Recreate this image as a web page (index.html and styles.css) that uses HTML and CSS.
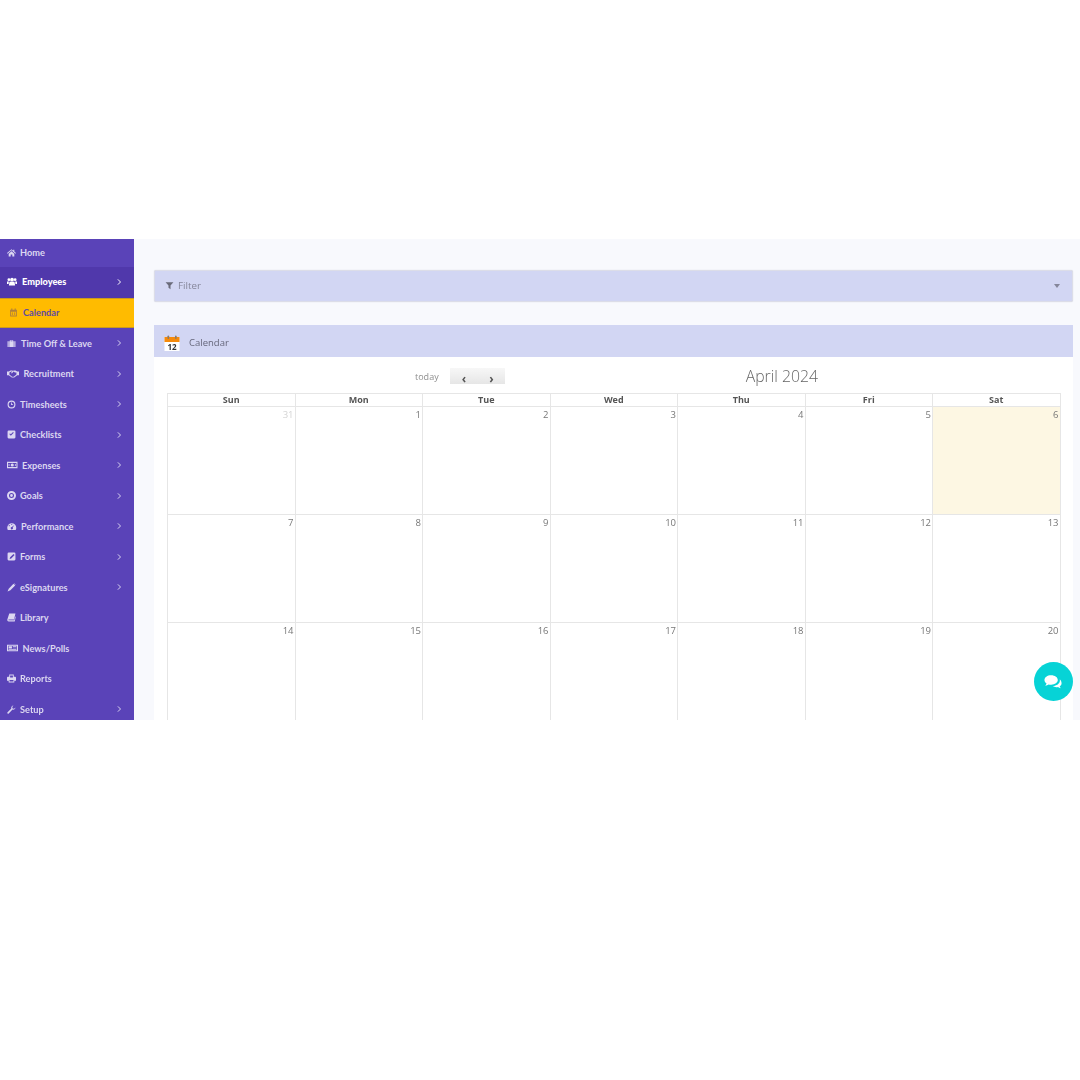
FILE: index.html
```html
<!DOCTYPE html>
<html lang="en">
<head>
<meta charset="utf-8">
<title>Calendar</title>
<link rel="stylesheet" href="styles.css">
</head>
<body>
<div class="top-space"></div>
<div class="app">
  <nav class="sidebar">
    <a class="item first"><svg class="ico" viewBox="0 0 16 16"><path d="M8 2 0 9l1 1 7-6 7 6 1-1-3-2.600V3h-2v1.700zM3 10.200V15h3.500v-3.500h3V15H13v-4.800L8 5.800z"/></svg><span>Home</span></a>
    <a class="item open strong"><svg class="ico wide" viewBox="0 0 16 16"><circle cx="8" cy="5" r="3"/><circle cx="3" cy="5" r="2.200"/><circle cx="13" cy="5" r="2.200"/><path d="M4 8.500h8l1 6H3zM0 8h3L2.500 12H0zM13 8h3v4h-2.500z"/></svg><span>Employees</span><svg class="chev" viewBox="0 0 8 10"><path d="M2.500 1.500 6 5 2.500 8.500"/></svg></a>
    <a class="item active"><svg class="ico cal" viewBox="0 0 16 16"><path d="M2 3h2V1h2v2h4V1h2v2h2v12H2zM3.500 6.500v7h9v-7z"/><path d="M5 8h2v2H5zM9 8h2v2H9zM5 11h2v1.500H5zM9 11h2v1.500H9z"/></svg><span>Calendar</span></a>
    <a class="item"><svg class="ico ico-case" viewBox="0 0 16 16"><path d="M5 4V2h6v2h4v10H1V4zm1.500 0h3V3.300h-3zM3 4h1v10H3zM12 4h1v10h-1z" fill-rule="evenodd"/></svg><span>Time Off &amp; Leave</span><svg class="chev" viewBox="0 0 8 10"><path d="M2.500 1.500 6 5 2.500 8.500"/></svg></a>
    <a class="item"><svg class="ico gap-lg" viewBox="0 0 20 14"><path d="M0 3h3l3-2h3l1 1 1-1h3l3 2h3v6h-3l-5 4H8L3 9H0zm4 1.500v3.300L8.500 11.500h2.700l4.500-3.700V4.500h-2.500L11 3 8 6 6.800 5 9 3H7z" fill-rule="evenodd"/></svg><span>Recruitment</span><svg class="chev" viewBox="0 0 8 10"><path d="M2.500 1.500 6 5 2.500 8.500"/></svg></a>
    <a class="item"><svg class="ico" viewBox="0 0 16 16"><path d="M8 1a7 7 0 1 0 0 14A7 7 0 0 0 8 1zm0 2a5 5 0 1 1 0 10A5 5 0 0 1 8 3zM7.200 4.500v4.300h3.600V7.400H8.600V4.500z" fill-rule="evenodd"/></svg><span>Timesheets</span><svg class="chev" viewBox="0 0 8 10"><path d="M2.500 1.500 6 5 2.500 8.500"/></svg></a>
    <a class="item"><svg class="ico" viewBox="0 0 16 16"><path d="M3 1h10a2 2 0 0 1 2 2v10a2 2 0 0 1-2 2H3a2 2 0 0 1-2-2V3a2 2 0 0 1 2-2zm9 4-1.300-1.300L6.800 7.600 5.300 6 4 7.300l2.800 2.900z" fill-rule="evenodd"/></svg><span>Checklists</span><svg class="chev" viewBox="0 0 8 10"><path d="M2.500 1.500 6 5 2.500 8.500"/></svg></a>
    <a class="item"><svg class="ico gap-md" viewBox="0 0 20 14"><path d="M0 1h20v12H0zm2 2v8h16V3zm8 1a3 3 0 1 1 0 6 3 3 0 0 1 0-6zM3 5.500h2v3H3zM15 5.500h2v3h-2z" fill-rule="evenodd"/></svg><span>Expenses</span><svg class="chev" viewBox="0 0 8 10"><path d="M2.500 1.500 6 5 2.500 8.500"/></svg></a>
    <a class="item"><svg class="ico" viewBox="0 0 16 16"><path d="M8 0a8 8 0 1 0 0 16A8 8 0 0 0 8 0zm0 3.500a4.500 4.500 0 1 1 0 9 4.500 4.500 0 0 1 0-9zm0 2a2.500 2.500 0 1 0 0 5 2.500 2.500 0 0 0 0-5z"/></svg><span>Goals</span><svg class="chev" viewBox="0 0 8 10"><path d="M2.500 1.500 6 5 2.500 8.500"/></svg></a>
    <a class="item"><svg class="ico wide-sm" viewBox="0 0 16 16"><path d="M8 2a8 8 0 0 0-8 8c0 1.500.4 2.800 1 4h14c.6-1.200 1-2.500 1-4a8 8 0 0 0-8-8zM8 3.500a1 1 0 1 1 0 2 1 1 0 0 1 0-2zM3.500 5.500a1 1 0 1 1 0 2 1 1 0 0 1 0-2zM12.500 5.500l-2.700 4.300a2 2 0 1 1-1.600-.8z" fill-rule="evenodd"/></svg><span>Performance</span><svg class="chev" viewBox="0 0 8 10"><path d="M2.500 1.500 6 5 2.500 8.500"/></svg></a>
    <a class="item"><svg class="ico" viewBox="0 0 16 16"><path d="M3 1h10a2 2 0 0 1 2 2v10a2 2 0 0 1-2 2H3a2 2 0 0 1-2-2V3a2 2 0 0 1 2-2zm8.500 2.500-6 6-.8 2.800 2.800-.8 6-6z" fill-rule="evenodd"/></svg><span>Forms</span><svg class="chev" viewBox="0 0 8 10"><path d="M2.500 1.500 6 5 2.500 8.500"/></svg></a>
    <a class="item"><svg class="ico" viewBox="0 0 16 16"><path d="M11.500 1.500 14.500 4.500 6 13 1 15l2-5zM12.800 .5l2.700 2.700-.5.500L12.300 1z"/></svg><span>eSignatures</span><svg class="chev" viewBox="0 0 8 10"><path d="M2.500 1.500 6 5 2.500 8.500"/></svg></a>
    <a class="item"><svg class="ico" viewBox="0 0 16 16"><path d="M4 1h11l-2.500 10.500H3.500c-.6 0-1 .3-1 .8s.4.700 1 .7H13l1.500-7 1 .5L13.800 15H3c-1.500 0-2.500-1-2.500-2.500 0-.5 0-1 .2-1.500z"/></svg><span>Library</span></a>
    <a class="item"><svg class="ico wide-news" viewBox="0 0 20 14"><path d="M0 1h20v12H0zm2 2v8h16V3zM3 4h6v4H3zM10.500 4H17v1h-6.500zM10.500 6.500H17v1h-6.500zM3 9h14v1H3z" fill-rule="evenodd"/></svg><span>News/Polls</span></a>
    <a class="item"><svg class="ico" viewBox="0 0 16 16"><path d="M4 1h8v4h2.500A1.500 1.500 0 0 1 16 6.500V12h-3v3H3v-3H0V6.500A1.500 1.500 0 0 1 1.500 5H4zm1.500 1.500V6h5V2.500zM4.500 10.500v3h7v-3z" fill-rule="evenodd"/></svg><span>Reports</span></a>
    <a class="item"><svg class="ico" viewBox="0 0 16 16"><path d="M11.500 1a4 4 0 0 0-3.800 5.200L1 12.800a1.500 1.500 0 0 0 0 2.100c.6.600 1.500.6 2.100 0l6.700-6.700A4 4 0 0 0 15 4.500l-2.400 2.300-2.600-.8-.7-2.600L11.500 1z"/></svg><span>Setup</span><svg class="chev" viewBox="0 0 8 10"><path d="M2.500 1.500 6 5 2.500 8.500"/></svg></a>
  </nav>
  <main class="content">
    <section class="filter">
      <svg class="filter-ico" viewBox="0 0 16 16"><path d="M1 2h14L9.800 8v6.500L6.200 12V8z"/></svg>
      <span class="filter-label">Filter</span>
      <span class="caret"></span>
    </section>
    <section class="panel">
      <header class="panel-head">
        <svg class="cal-logo" viewBox="0 0 16 16"><rect x="0.500" y="2" width="15" height="14" fill="#fff"/><rect x="0.500" y="2" width="15" height="5" fill="#f58a0b"/><rect x="3.500" y="0.500" width="1.600" height="3.500" rx=".8" fill="#8a7a6a"/><rect x="11" y="0.500" width="1.600" height="3.500" rx=".8" fill="#8a7a6a"/><text x="8" y="15" text-anchor="middle" class="cal-logo-num">12</text></svg>
        <span class="panel-title">Calendar</span>
      </header>
      <div class="panel-body">
        <div class="toolbar">
          <span class="today">today</span>
          <div class="nav-btns"><span class="nav-btn">&#8249;</span><span class="nav-btn">&#8250;</span></div>
          <h2 class="month">April 2024</h2>
        </div>
        <div class="grid">
          <div class="dow">Sun</div><div class="dow">Mon</div><div class="dow">Tue</div><div class="dow">Wed</div><div class="dow">Thu</div><div class="dow">Fri</div><div class="dow">Sat</div>
          <div class="day muted">31</div><div class="day">1</div><div class="day">2</div><div class="day">3</div><div class="day">4</div><div class="day">5</div><div class="day now">6</div>
          <div class="day">7</div><div class="day">8</div><div class="day">9</div><div class="day">10</div><div class="day">11</div><div class="day">12</div><div class="day">13</div>
          <div class="day">14</div><div class="day">15</div><div class="day">16</div><div class="day">17</div><div class="day">18</div><div class="day">19</div><div class="day">20</div>
        </div>
      </div>
    </section>
  </main>
  <button class="chat" type="button" aria-label="Chat"><svg viewBox="0 0 20 16"><path d="M7.500 1C3.400 1 .5 3.200.5 6c0 1.500.8 2.800 2.200 3.700-.2.800-.7 1.500-1.400 2.200 1.500-.2 2.700-.7 3.600-1.300.8.200 1.700.3 2.600.3 4.100 0 7-2.200 7-4.900S11.600 1 7.500 1z"/><path d="M16.500 5.200c.2.400.2.800.2 1.200 0 3.300-3.300 5.700-7.600 5.900 1 .8 2.400 1.200 3.900 1.200.6 0 1.200-.1 1.700-.2.800.6 1.900 1 3 1.200-.6-.6-1-1.200-1.200-1.900 1.300-.8 2-2 2-3.300 0-1.700-.8-3.100-2-4.100z"/></svg></button>
</div>
</body>
</html>
```

FILE: styles.css
```css
* { box-sizing: border-box; }
html, body { margin: 0; padding: 0; background: #fff; }
body { font-family: "Open Sans", "Noto Sans", sans-serif; height: 1080px; overflow: hidden; }
.top-space { height: 239px; }
.app { position: relative; display: flex; height: 481px; overflow: hidden; background: #f8f9fd; }

.sidebar { flex: 0 0 134px; width: 134px; background: #5a43b8; display: flex; flex-direction: column; will-change: opacity; }
.item { flex: 0 0 30.5px; height: 30.5px; display: flex; align-items: center; padding-left: 7px; color: #dcd7f1; font-family: Lato, "Open Sans", sans-serif; font-size: 9.200px; font-weight: 700; white-space: nowrap; }
.item.first { flex-basis: 28px; height: 28px; padding-bottom: 2px; }
.item.open { background: #5038ab; padding-bottom: 1px; }
.item.strong { color: #fff; font-weight: 900; }
.item.active { background: #ffbb00; color: #5f4ba0; padding-left: 9px; border-top: 1px solid #c99a20; border-bottom: 1px solid #c99a20; }
.ico { width: 9px; height: 9px; margin-right: 4px; fill: currentColor; flex: none; }
.ico.wide { width: 10px; height: 11px; margin-right: 5px; }
.ico.ico-case { margin-right: 5px; }
.ico.wide-sm { width: 9.500px; margin-right: 4.500px; }
.ico.gap-lg { width: 12px; height: 10px; margin-right: 4.500px; }
.ico.gap-md { width: 10.500px; height: 10px; margin-right: 4.500px; }
.ico.wide-news { width: 11px; height: 10px; margin-right: 4.500px; }
.ico.cal { fill: #b07f3a; margin-right: 5px; }
.chev { width: 6px; height: 8px; margin-left: auto; margin-right: 12px; fill: none; stroke: currentColor; stroke-width: 1.300; flex: none; }

.content { flex: 1; min-width: 0; padding: 31px 7px 0 20px; display: flex; flex-direction: column; gap: 23px; will-change: opacity; }
.filter { height: 32px; flex: none; display: flex; align-items: center; padding: 0 12px 1px 10px; background: #d2d6f3; border: 1px solid #dcdde8; border-radius: 2px; box-shadow: 0 0 1px #c8c9d4; color: #7f8090; font-size: 9.800px; }
.filter-ico { width: 9px; height: 9px; fill: #6a6b7a; margin-right: 4px; }
.filter-label { color: #85869a; }
.caret { margin-left: auto; width: 0; height: 0; border-left: 3.500px solid transparent; border-right: 3.500px solid transparent; border-top: 4px solid #85869a; }

.panel { flex: none; background: #fff; }
.panel-head { height: 32px; background: #d2d6f3; display: flex; align-items: center; padding: 2px 0 0 10px; }
.cal-logo { width: 16px; height: 16px; margin-right: 9px; margin-top: 2px; }
.cal-logo-num { font: 700 8px "Open Sans", sans-serif; fill: #333; }
.panel-title { font-size: 9.500px; color: #65667a; }
.panel-body { padding: 0 13px; }

.toolbar { height: 36px; display: flex; align-items: center; }
.today { margin-left: 248px; margin-top: 2px; font-size: 9px; color: #8f8f8f; }
.nav-btns { display: flex; margin-left: 11.500px; margin-top: 1px; }
.nav-btn { width: 27.500px; height: 16px; display: flex; align-items: flex-end; justify-content: center; background: linear-gradient(#f7f7f7, #e6e6e6); color: #555; font-size: 12px; font-weight: 700; line-height: 10px; }
.month { margin: 1px 0 0 240.500px; font-size: 15.800px; font-weight: 300; color: #666; }

.grid { display: grid; grid-template-columns: repeat(7, 1fr); grid-template-rows: 13px 108px 108px 108px; width: 893.500px; border-top: 1px solid #e6e6e6; border-left: 1px solid #e6e6e6; }
.dow { border-right: 1px solid #e6e6e6; border-bottom: 1px solid #e6e6e6; text-align: center; font-size: 9px; font-weight: 700; line-height: 12px; color: #555; }
.day { border-right: 1px solid #e6e6e6; border-bottom: 1px solid #e6e6e6; text-align: right; padding: 2px 1px 0 0; font-size: 9.500px; line-height: 12px; color: #777; }
.day.muted { color: #d4d4d4; }
.day.now { background: #fdf7e3; }

.chat { position: absolute; left: 1034px; top: 423px; width: 39px; height: 39px; padding: 0; border: 0; border-radius: 50%; background: #07d3d6; display: flex; align-items: center; justify-content: center; }
.chat svg { width: 19px; height: 16px; fill: #fff; }
```
